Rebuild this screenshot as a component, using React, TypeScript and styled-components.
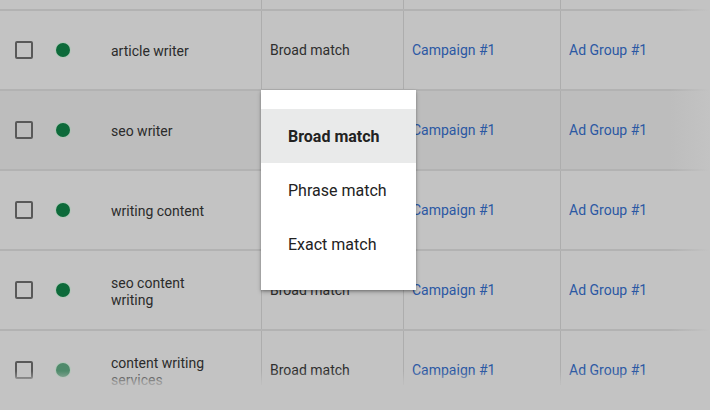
import React from "react";
import styled, { createGlobalStyle } from "styled-components";

const Global = createGlobalStyle`
  html, body { margin: 0; padding: 0; background: #c3c3c3; }
  body { font-family: Roboto, "Liberation Sans", Arial, sans-serif; }
  * { box-sizing: border-box; }
`;

const Page = styled.div`
  position: relative;
  width: 710px;
  height: 410px;
  overflow: hidden;
  background: #c3c3c3;
`;

const Table = styled.div`
  height: 385px;
  overflow: hidden;
  display: flex;
  flex-direction: column;
`;

const cols = "261px 142px 157px 1fr";

const HeaderStub = styled.div`
  display: grid;
  grid-template-columns: ${cols};
  height: 9px;
  flex-shrink: 0;
`;

const StubCell = styled.div<{ $line?: boolean }>`
  border-left: ${(p) => (p.$line ? "1px solid #adadad" : "none")};
`;

const Row = styled.div<{ $hover?: boolean }>`
  display: grid;
  grid-template-columns: ${cols};
  height: 80px;
  flex-shrink: 0;
  background: ${(p) => (p.$hover ? "#bdbdbd" : "#c3c3c3")};
  border-top: 2px solid #b2b2b2;
`;

const KeywordCell = styled.div`
  display: grid;
  grid-template-columns: 56px 55px 1fr;
  align-items: center;
`;

const CheckWrap = styled.div`
  padding-left: 15px;
  display: flex;
  align-items: center;
`;

const Checkbox = styled.div`
  width: 18px;
  height: 18px;
  border: 2px solid #595959;
  border-radius: 2px;
`;

const Dot = styled.div<{ $faded?: boolean }>`
  width: 14px;
  height: 14px;
  border-radius: 50%;
  background: ${(p) => (p.$faded ? "#4f8a6b" : "#0d6a3a")};
  box-shadow: 0 0 0 1px rgba(150, 210, 170, 0.35);
`;

const Keyword = styled.div`
  font-size: 14px;
  line-height: 17px;
  padding-top: 3px;
  color: #2b2b2b;
  max-width: 106px;
`;

const Cell = styled.div`
  border-left: 1px solid #adadad;
  display: flex;
  align-items: center;
  padding-left: 8px;
  font-size: 14px;
  color: #2e2e2e;
`;

const LinkCell = styled(Cell)`
  color: #2b58a3;
`;

const FadeBottom = styled.div`
  position: absolute;
  left: 0;
  right: 0;
  top: 371px;
  height: 20px;
  background: linear-gradient(to bottom, rgba(195, 195, 195, 0), rgba(195, 195, 195, 0.7) 55%, #c3c3c3);
  pointer-events: none;
`;

const FadeRight = styled.div`
  position: absolute;
  top: 0;
  right: 0;
  bottom: 0;
  width: 40px;
  background: linear-gradient(to right, rgba(195, 195, 195, 0), #c3c3c3);
  pointer-events: none;
`;

const Menu = styled.div`
  position: absolute;
  left: 261px;
  top: 90px;
  width: 155px;
  height: 200px;
  background: #ffffff;
  padding-top: 19px;
  box-shadow: 0 2px 4px rgba(0, 0, 0, 0.28), 0 1px 2px rgba(0, 0, 0, 0.18);
  display: flex;
  flex-direction: column;
`;

const MenuItem = styled.div<{ $active?: boolean }>`
  height: 54px;
  display: flex;
  align-items: center;
  padding-left: 27px;
  font-size: 16px;
  color: #222;
  font-weight: ${(p) => (p.$active ? 700 : 400)};
  background: ${(p) => (p.$active ? "#e9eaea" : "transparent")};
`;

const rows = [
  { kw: "article writer" },
  { kw: "seo writer", hover: true },
  { kw: "writing content" },
  { kw: "seo content writing" },
  { kw: "content writing services", faded: true },
];

export default function App() {
  return (
    <Page>
      <Global />
      <Table>
        <HeaderStub>
          <StubCell />
          <StubCell $line />
          <StubCell $line />
          <StubCell $line />
        </HeaderStub>
        {rows.map((r, i) => (
          <Row key={i} $hover={r.hover}>
            <KeywordCell>
              <CheckWrap>
                <Checkbox />
              </CheckWrap>
              <Dot $faded={r.faded} />
              <Keyword>{r.kw}</Keyword>
            </KeywordCell>
            <Cell>Broad match</Cell>
            <LinkCell>Campaign #1</LinkCell>
            <LinkCell>Ad Group #1</LinkCell>
          </Row>
        ))}
      </Table>
      <FadeBottom />
      <FadeRight />
      <Menu>
        <MenuItem $active>Broad match</MenuItem>
        <MenuItem>Phrase match</MenuItem>
        <MenuItem>Exact match</MenuItem>
      </Menu>
    </Page>
  );
}
